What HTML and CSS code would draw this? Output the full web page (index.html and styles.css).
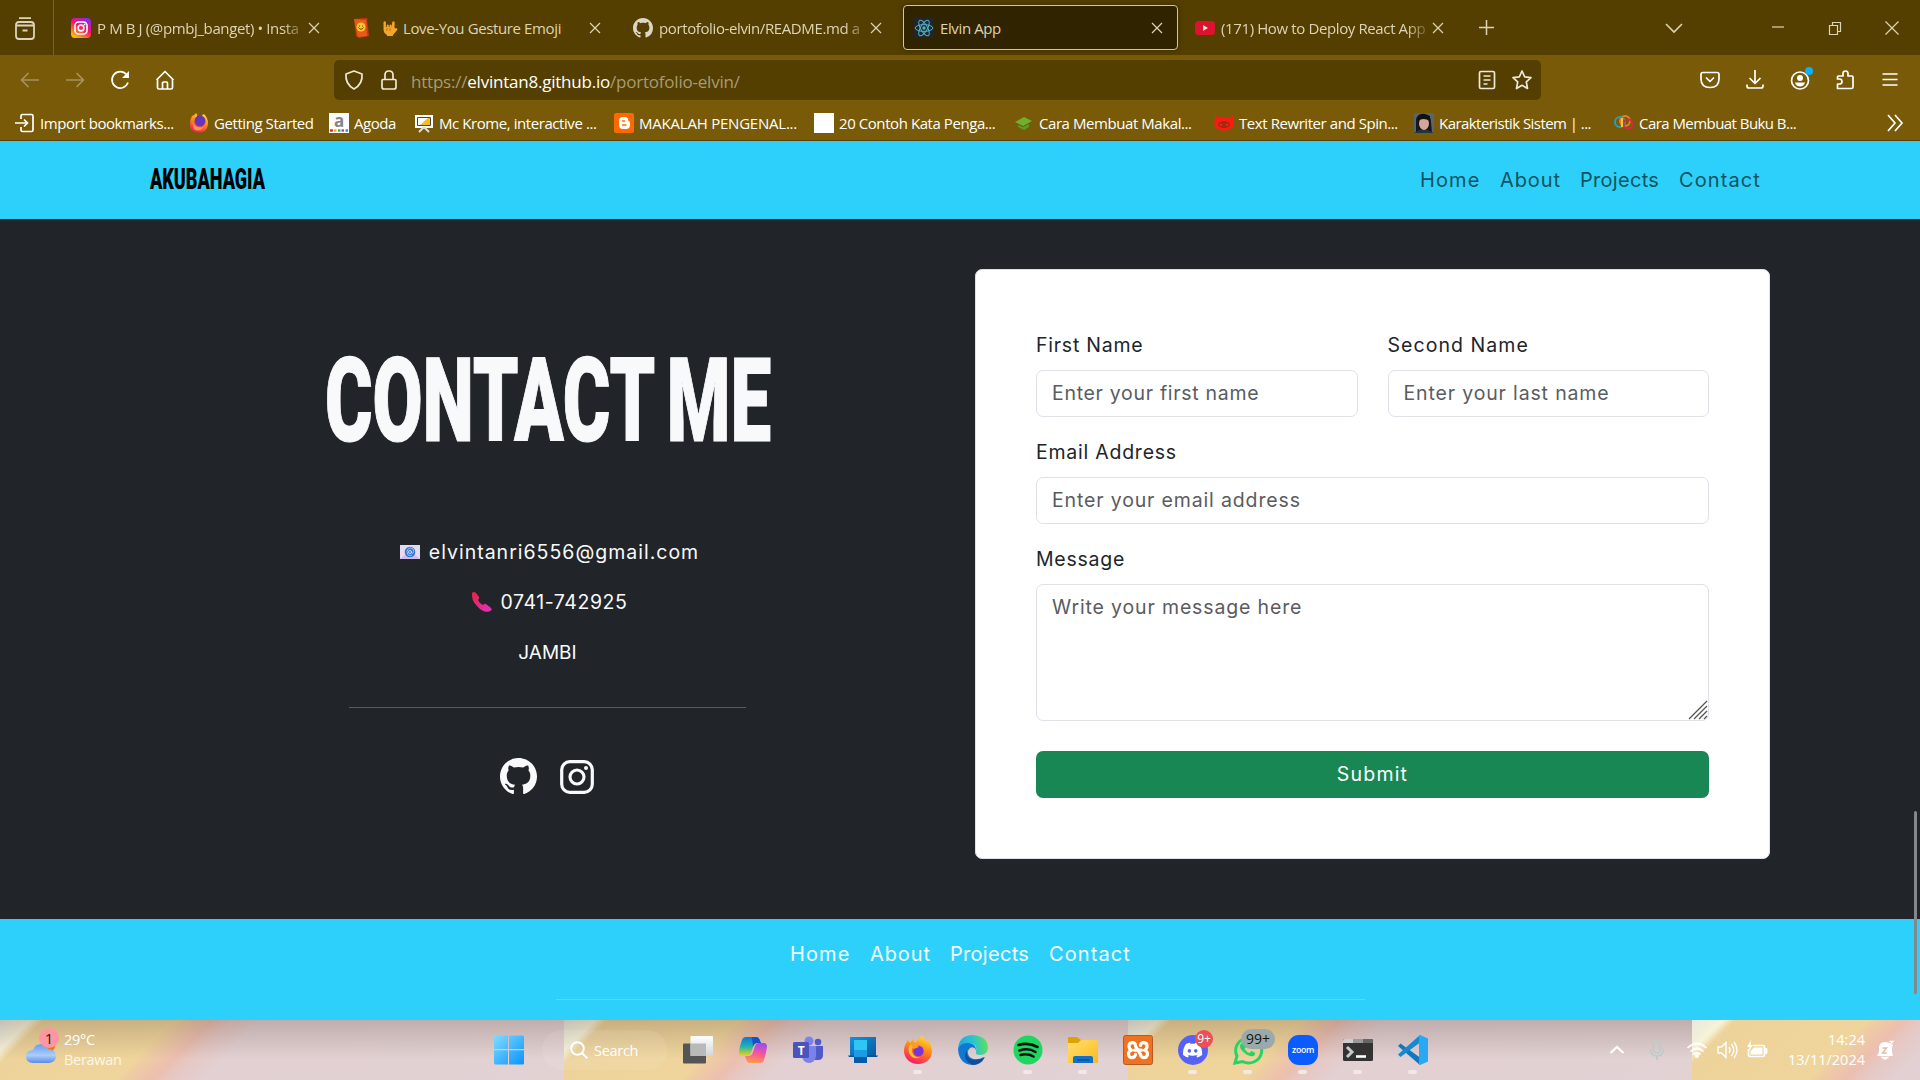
FILE: index.html
```html
<!DOCTYPE html>
<html lang="en">
<head>
<meta charset="utf-8">
<title>Elvin App</title>
<link rel="stylesheet" href="styles.css">
</head>
<body>
<svg class="defs" width="0" height="0" aria-hidden="true">
  <defs>
    <symbol id="close" viewBox="0 0 12 12"><path d="M1 1l10 10M11 1L1 11" fill="none" stroke="currentColor" stroke-width="1.2"/></symbol>
    <symbol id="github" viewBox="0 0 16 16"><path fill="currentColor" d="M8 0C3.58 0 0 3.58 0 8c0 3.54 2.29 6.53 5.47 7.59.4.07.55-.17.55-.38 0-.19-.01-.82-.01-1.49-2.01.37-2.53-.49-2.69-.94-.09-.23-.48-.94-.82-1.13-.28-.15-.68-.52-.01-.53.63-.01 1.08.58 1.23.82.72 1.21 1.87.87 2.33.66.07-.52.28-.87.51-1.07-1.78-.2-3.64-.89-3.64-3.95 0-.87.31-1.59.82-2.15-.08-.2-.36-1.02.08-2.12 0 0 .67-.21 2.2.82.64-.18 1.32-.27 2-.27s1.36.09 2 .27c1.53-1.04 2.2-.82 2.2-.82.44 1.1.16 1.92.08 2.12.51.56.82 1.27.82 2.15 0 3.07-1.87 3.75-3.65 3.95.29.25.54.73.54 1.48 0 1.07-.01 1.93-.01 2.2 0 .21.15.46.55.38A8.01 8.01 0 0 0 16 8c0-4.42-3.58-8-8-8"/></symbol>
    <symbol id="firefox" viewBox="0 0 30 30">
      <path d="M15 4c2-1 3-2 4-4 1 3 3 4 5 7 1-1 1-2 1-2 3 4 4 8 4 11 0 8-6 13-14 13S1 23 1 16c0-5 2-8 4-11l2 3 3-4 2 4z" fill="url(#gFox)"/>
      <path d="M6 11c2-3 6-2 9 0l-6 2c-1 6 3 10 8 9-7 4-13-3-11-11z" fill="#ffc02e"/>
      <circle cx="15.500" cy="16" r="5.200" fill="#7a35d8"/>
      <path d="M7 9c3-1 6 0 9 3l-5 2z" fill="#ff9a24"/>
    </symbol>
    <linearGradient id="gFox" x1=".7" y1="0" x2=".3" y2="1"><stop offset="0" stop-color="#ffe033"/><stop offset=".45" stop-color="#ff8a16"/><stop offset="1" stop-color="#f5156c"/></linearGradient>
    <linearGradient id="gInsta" x1=".8" y1="0" x2=".2" y2="1"><stop offset="0" stop-color="#7b2ff0"/><stop offset=".45" stop-color="#ff0f6c"/><stop offset="1" stop-color="#ffc400"/></linearGradient>
    <linearGradient id="gWin" x1="0" y1="0" x2="1" y2="1"><stop offset="0" stop-color="#7fdcff"/><stop offset="1" stop-color="#0a93fb"/></linearGradient>
    <linearGradient id="gCop1" x1="0" y1="0" x2="0" y2="1"><stop offset="0" stop-color="#1272e0"/><stop offset=".5" stop-color="#21b4a8"/><stop offset="1" stop-color="#f5d21a"/></linearGradient>
    <linearGradient id="gCop2" x1=".6" y1="0" x2=".4" y2="1"><stop offset="0" stop-color="#9b4df0"/><stop offset=".5" stop-color="#f4569a"/><stop offset="1" stop-color="#ff9a4a"/></linearGradient>
    <linearGradient id="gPhone" x1="0" y1="0" x2="1" y2="1"><stop offset="0" stop-color="#1592e0"/><stop offset="1" stop-color="#075a9f"/></linearGradient>
    <linearGradient id="gEdge" x1="0" y1=".4" x2="1" y2=".3"><stop offset="0" stop-color="#1aa8e0"/><stop offset=".5" stop-color="#2cc3d0"/><stop offset="1" stop-color="#62e353"/></linearGradient>
    <linearGradient id="gFolder" x1="0" y1="0" x2="1" y2="1"><stop offset="0" stop-color="#ffdf6e"/><stop offset="1" stop-color="#fcba1e"/></linearGradient>
    <linearGradient id="gCloud" x1="0" y1="0" x2="0" y2="1"><stop offset="0" stop-color="#6c9aef"/><stop offset=".6" stop-color="#a9cdfb"/><stop offset="1" stop-color="#5c8be6"/></linearGradient>
    <linearGradient id="gCall" x1="0" y1="0" x2="1" y2="1"><stop offset="0" stop-color="#e8233e"/><stop offset="1" stop-color="#dc35c0"/></linearGradient>
    <linearGradient id="gTv" x1="0" y1="0" x2="0" y2="1"><stop offset="0" stop-color="#fff"/><stop offset="1" stop-color="#d4d4d4"/></linearGradient>
  </defs>
</svg>

<header class="browser">
  <div class="tabstrip">
    <div class="firefox-view"><svg width="20" height="24" viewBox="0 0 20 24" fill="none" stroke="currentColor" stroke-width="1.800"><path d="M4 1.200h12M1 8.500Q1 5 4 5h12q3 0 3 3.500M1 8.500h18V19q0 3-3 3H4q-3 0-3-3zM7.500 13.500h5"/></svg></div>
    <div class="tab">
      <svg class="fav" viewBox="0 0 20 20"><rect width="20" height="20" rx="4" fill="url(#gInsta)"/><rect x="4" y="4" width="12" height="12" rx="3.500" fill="none" stroke="#fff" stroke-width="1.600"/><circle cx="10" cy="10" r="2.900" fill="none" stroke="#fff" stroke-width="1.600"/><circle cx="13.600" cy="6.400" r=".9" fill="#fff"/></svg>
      <span class="tab-title cut">P M B J (@pmbj_banget) • Insta</span><svg class="x"><use href="#close"/></svg>
    </div>
    <div class="tab">
      <svg class="fav" viewBox="0 0 20 20"><path d="M2 1l13-1 2 18-10 2-3-2z" fill="#c93a0e"/><path d="M2 1l12 1 1 16-9 1z" fill="#ea5a17"/><circle cx="9" cy="9" r="4.500" fill="#ffc832"/><path d="M6.500 9.500q2.500 3.500 5 0M7.500 7.500v1M10.500 7.500v1" stroke="#74370a" fill="none"/></svg>
      <span class="tab-title"><svg class="hand" width="17" height="18" viewBox="0 0 17 18"><path d="M2.500 9V3q1.200-1.500 2.400 0v5h.8V6q1-1 2 0v2h.8V6q1-1 2 0v3l.8-6q1.400-1.400 2.400.2L13.500 9l2.500.5q1 .8 0 1.800L12 16v1H6v-1q-4-2-3.500-7z" fill="#f4a62a"/><path d="M6 9v3M9 9v3" stroke="#c97510"/></svg>Love-You Gesture Emoji</span><svg class="x"><use href="#close"/></svg>
    </div>
    <div class="tab">
      <svg class="fav gh"><use href="#github"/></svg>
      <span class="tab-title cut">portofolio-elvin/README.md a</span><svg class="x"><use href="#close"/></svg>
    </div>
    <div class="tab active">
      <svg class="fav" viewBox="0 0 20 20"><rect width="20" height="20" fill="#22262b"/><g fill="none" stroke="#4eb4cb" stroke-width="1"><ellipse cx="10" cy="10" rx="8.800" ry="3.400"/><ellipse cx="10" cy="10" rx="8.800" ry="3.400" transform="rotate(60 10 10)"/><ellipse cx="10" cy="10" rx="8.800" ry="3.400" transform="rotate(120 10 10)"/></g><circle cx="10" cy="10" r="1.700" fill="#4eb4cb"/></svg>
      <span class="tab-title">Elvin App</span><svg class="x"><use href="#close"/></svg>
    </div>
    <div class="tab">
      <svg class="fav" viewBox="0 0 20 20"><rect y="3" width="20" height="14" rx="3.500" fill="#dc1230"/><path d="M8 7v6l5-3z" fill="#e8dfc8"/></svg>
      <span class="tab-title cut">(171) How to Deploy React App</span><svg class="x"><use href="#close"/></svg>
    </div>
    <svg class="plus" viewBox="0 0 16 16"><path d="M8 0v16M0 8h16" stroke="currentColor" stroke-width="1.600"/></svg>
    <div class="window-controls">
      <svg viewBox="0 0 16 16"><path d="M0 4l8 8 8-8" fill="none" stroke="currentColor" stroke-width="1.600"/></svg>
      <svg viewBox="0 0 16 16"><path d="M2 7h12" stroke="currentColor" stroke-width="1.200"/></svg>
      <svg viewBox="0 0 16 16"><path d="M2.500 5.500h8v9h-8zM5.500 5V2.500h8v9H11" fill="none" stroke="currentColor" stroke-width="1.200"/></svg>
      <svg viewBox="0 0 16 16"><path d="M1.500 1.500l13 13M14.500 1.500l-13 13" stroke="currentColor" stroke-width="1.200"/></svg>
    </div>
  </div>

  <div class="toolbar">
    <div class="nav-buttons">
      <svg class="dim" viewBox="0 0 20 20"><path d="M19 10H1.500M8.500 3l-7 7 7 7"/></svg>
      <svg class="dim" viewBox="0 0 20 20"><path d="M1 10h17.500M11.500 3l7 7-7 7"/></svg>
      <svg viewBox="0 0 20 20"><path d="M18 12.500A8.200 8.200 0 1 1 16.500 4.500" /><path d="M19 1v7h-7z" fill="currentColor" stroke="none"/></svg>
      <svg viewBox="0 0 20 20"><path d="M1.500 10L10 1.500l8.500 8.500M2.500 9v8.500q0 1.500 1.500 1.500h12q1.500 0 1.500-1.500V9M7.500 19v-6q0-1 1-1h3q1 0 1 1v6"/></svg>
    </div>
    <div class="urlbar">
      <svg viewBox="0 0 20 20"><path d="M10 1l8 3q1 10-8 15Q1 14 2 4z"/></svg>
      <svg viewBox="0 0 20 20"><path d="M4 9.500h12q1 0 1 1V17q0 2-2 2H5q-2 0-2-2v-6.500q0-1 1-1zM6 9V5q0-4 4-4t4 4v4"/></svg>
      <span class="url">https://<b>elvintan8.github.io</b>/portofolio-elvin/</span>
      <svg viewBox="0 0 20 20"><path d="M4 1.500h12q1.500 0 1.500 1.500v14q0 1.500-1.500 1.500H4Q2.500 18.500 2.500 17V3Q2.500 1.500 4 1.500zM6.500 6h7M6.500 10h7M6.500 14h4"/></svg>
      <svg viewBox="0 0 20 20"><path d="M10 1l2.700 5.800 6.300.8-4.700 4.300 1.200 6.600L10 15.300l-5.500 3.200 1.200-6.600L1 7.600l6.300-.8z"/></svg>
    </div>
    <div class="tools">
      <svg viewBox="0 0 20 20"><path d="M3 2.500h14q2 0 2 2V9q0 8.500-9 8.500T1 9V4.500q0-2 2-2zM6 7.500l4 4 4-4"/></svg>
      <svg viewBox="0 0 20 20"><path d="M10 0v13M4.500 8l5.500 5.500L15.500 8M2 14.500V16q0 2 2 2h12q2 0 2-2v-1.500"/></svg>
      <svg viewBox="0 0 20 20"><circle cx="10" cy="10.500" r="8.500"/><circle cx="10" cy="8" r="3" fill="currentColor" stroke="none"/><path d="M5 12.500h10q-1 4-5 4t-5-4z" fill="currentColor" stroke="none"/><circle cx="19" cy="1" r="4" fill="#0cb0f8" stroke="none"/></svg>
      <svg viewBox="0 0 20 20"><path d="M2.500 18.500v-4.500h2q2.500 0 2.500-2.500T4.500 9h-2V7q0-1 1-1H8V3.500Q8 1 10.500 1T13 3.500V6h4q1 0 1 1v10q0 1.500-1.500 1.500z"/></svg>
      <svg viewBox="0 0 20 20"><path d="M2.500 4h15M2.500 9.500h15M2.500 15h15"/></svg>
    </div>
  </div>

  <div class="bookmarks">
    <a class="bm first"><svg viewBox="0 0 20 20" fill="none" stroke="#fff" stroke-width="1.700"><path d="M6 6V3q0-1.500 1.500-1.500h9Q18 1.500 18 3v14q0 1.500-1.500 1.500h-9Q6 18.500 6 17v-3M0 10h12M9 6.500l3.500 3.500L9 13.500"/></svg>Import bookmarks...</a>
    <a class="bm second"><svg viewBox="0 0 20 20"><path d="M3 3q3-1 4-3 2 2 1 4h4q2-3 3-3 4 4 4 9 0 9-9 9.500T1 11q0-5 2-8z" fill="url(#gFox)"/><circle cx="11" cy="8" r="5.500" fill="#6735b8"/><path d="M3 8q3 8 12 6-5 6-10 2z" fill="#ff9340"/></svg>Getting Started</a>
    <a class="bm third"><svg viewBox="0 0 20 20"><rect width="20" height="20" fill="#fff"/><text x="10" y="14" text-anchor="middle" font-size="17" font-weight="700" fill="#858585">a</text><path d="M1 17.500h3" stroke="#e12d2d" stroke-width="2.500"/><path d="M5 17.500h2.500" stroke="#f5ad14" stroke-width="2.500"/><path d="M9 17.500h2.500" stroke="#42ac49" stroke-width="2.500"/><path d="M12.500 17.500H15" stroke="#a646bd" stroke-width="2.500"/><path d="M16.500 17.500H19" stroke="#3b83dd" stroke-width="2.500"/></svg>Agoda</a>
    <a class="bm"><svg viewBox="0 0 20 20"><path d="M1 2h18v13H1z" fill="#fff"/><path d="M3.500 4.500h13v8h-13z" fill="#fff" stroke="#444"/><path d="M6 12l8-7h2v7z" fill="#f5bd22"/><path d="M5 19l4-4h2l4 4" stroke="#ddd" stroke-width="2" fill="none"/></svg>Mc Krome, interactive ...</a>
    <a class="bm caps"><svg viewBox="0 0 20 20"><rect width="20" height="20" rx="2" fill="#ff6a00"/><path d="M5 8q0-4 4-4h2q3 0 3.500 4 1.500 0 1.500 2v2q0 4-4 4H9q-4 0-4-4z" fill="#fff"/><path d="M8 8h3M8 12h4.500" stroke="#ff6a00" stroke-width="1.700"/></svg>MAKALAH PENGENAL...</a>
    <a class="bm"><svg viewBox="0 0 20 20"><path d="M0 0h20v20H0z" fill="#fff"/></svg>20 Contoh Kata Penga...</a>
    <a class="bm"><svg viewBox="0 0 20 20"><path d="M1 9l9-5 8 4-9 5z" fill="#6fb12f"/><path d="M4 12l5 2 6-3v3l-5 3-6-3z" fill="#5b9b2c"/></svg>Cara Membuat Makal...</a>
    <a class="bm"><svg viewBox="0 0 20 20"><path d="M1 2l4 3q5-2 10 0l4-3v5q2 5-1 8-8 6-16 0-3-3-1-8z" fill="#fb1b12"/><path d="M4 10q6-4 12 0v2.500q-6 5-12 0z" fill="#a32a0a"/><path d="M5 10l4 2-2 1zM15 10l-4 2 2 1z" fill="#ff2b1a"/></svg>Text Rewriter and Spin...</a>
    <a class="bm tight"><svg viewBox="0 0 20 20"><path d="M0 0h20v20H0z" fill="#59656f"/><path d="M2 20V6q2-6 9-5 6 1 6 8l1 11z" fill="#17181b"/><ellipse cx="10" cy="10.500" rx="5" ry="6.500" fill="#d5a79a"/><path d="M4 8q5-4 12 0V3L9 1 4 4z" fill="#111"/><path d="M0 20l5-3h9l6 3z" fill="#23333f"/></svg>Karakteristik Sistem | ...</a>
    <a class="bm tight"><svg viewBox="0 0 20 20" fill="none" stroke-width="2"><circle cx="11" cy="8" r="5" stroke="#ef7e20"/><circle cx="6" cy="9" r="5" stroke="#24a1b8"/><circle cx="14" cy="11" r="4.500" stroke="#d5264b"/><path d="M8 5v9" stroke="#f4cb1b"/></svg>Cara Membuat Buku B...</a>
    <svg class="more" viewBox="0 0 18 18" fill="none" stroke="#fff" stroke-width="1.700"><path d="M2 1l7 8-7 8M9 1l7 8-7 8"/></svg>
  </div>
</header>

<nav class="site-nav">
  <svg class="brand" width="120" height="30"><text x="0" y="24" textLength="115" lengthAdjust="spacingAndGlyphs">AKUBAHAGIA</text></svg>
  <div class="links"><a>Home</a><a>About</a><a>Projects</a><a>Contact</a></div>
</nav>

<main class="contact">
  <section class="info">
    <svg class="title" width="450" height="100"><text x="2" y="90.500" textLength="446" lengthAdjust="spacingAndGlyphs">CONTACT ME</text></svg>
    <p class="mail"><svg width="20" height="14" viewBox="0 0 20 14"><path d="M0 0h20v14H0z" fill="#e6d9f3"/><path d="M0 14l7-6h6l7 6z" fill="#d3bce8"/><circle cx="10" cy="7" r="5.300" fill="#2f78d4"/><circle cx="10" cy="7" r="1.500" fill="none" stroke="#dcd6f4"/><path d="M11.500 7q0 2 1.500 1t0-4q-3-2-5 0t0 6q2 1 4 0" fill="none" stroke="#c8ccf0" stroke-width=".8"/></svg><span>elvintanri6556@gmail.com</span></p>
    <p class="phone"><svg width="21" height="20" viewBox="0 0 21 20"><path d="M1 1q2-2 4 0l3 4q1 1-1 3 1 3 5 5 2-2 3-1l5 4q2 2-2 3.500Q12 21 6 14 0 8 1 1z" fill="url(#gCall)"/></svg><span>0741-742925</span></p>
    <p class="city"><span>JAMBI</span></p>
    <hr>
    <div class="social">
      <svg width="37" height="37"><use href="#github"/></svg>
      <svg width="34" height="34" viewBox="0 0 34 34"><rect x="1.700" y="1.700" width="30.600" height="30.600" rx="8" fill="none" stroke="#f8f9fa" stroke-width="3.200"/><circle cx="17" cy="17" r="7" fill="none" stroke="#f8f9fa" stroke-width="3.100"/><circle cx="26" cy="8" r="2" fill="#f8f9fa"/></svg>
    </div>
  </section>
  <form class="card">
    <div class="row">
      <div class="field"><label for="first">First Name</label><input id="first" placeholder="Enter your first name"></div>
      <div class="field"><label class="wide" for="last">Second Name</label><input id="last" placeholder="Enter your last name"></div>
    </div>
    <div class="field"><label for="email">Email Address</label><input id="email" placeholder="Enter your email address"></div>
    <div class="field msg"><label for="message">Message</label><textarea id="message" placeholder="Write your message here"></textarea><svg class="grip" width="18" height="18" viewBox="0 0 18 18"><path d="M0 18L18 0M5 18L18 5M10 18l8-8M15 18l3-3" stroke="#555" stroke-width="1.300"/></svg></div>
    <button type="button">Submit</button>
  </form>
</main>

<footer class="site-footer">
  <div class="links"><a>Home</a><a>About</a><a>Projects</a><a>Contact</a></div>
  <hr>
</footer>
<div class="scroll-thumb"></div>

<div class="taskbar">
  <div class="weather">
    <svg width="34" height="38" viewBox="0 0 34 38"><circle cx="24" cy="18" r="6" fill="#f0751a"/><path d="M8 35q-7 0-7-6.500T8 22q2-6 8-6 5 0 7 5 8 1 8 7t-7 7z" fill="url(#gCloud)"/><circle cx="24" cy="10" r="10" fill="#fd96a2"/><text x="24" y="15.500" text-anchor="middle" font-size="15" fill="#222">1</text></svg>
    <div><span>29°C</span><span class="faint">Berawan</span></div>
  </div>
  <div class="apps">
    <div class="app start"><svg viewBox="0 0 30 30" fill="url(#gWin)"><path d="M0 2q0-1.500 1.500-1.500H14V14H0zM15 .5h13.500Q30 .5 30 2v12H15zM0 15.200h14v14.300H1.500Q0 29.500 0 28zM15 15.200h15V28q0 1.500-1.500 1.500H15z"/></svg></div>
    <div class="search"><svg width="18" height="18" viewBox="0 0 18 18" fill="none" stroke="#fff" stroke-width="2"><circle cx="7.500" cy="7.500" r="6.300"/><path d="M12 12l5.300 5.300"/></svg>Search</div>
    <div class="app"><svg viewBox="0 0 30 30"><rect y="8.500" width="23" height="20" rx="1" fill="#555"/><rect x="7.500" y="1" width="22.500" height="20" rx="1" fill="url(#gTv)"/><path d="M7.500 8.500H23V21H7.500z" fill="#b9b9b9"/></svg></div>
    <div class="app"><svg viewBox="0 0 30 30"><path d="M8 2h10q3 0 4 4l1 2h-3q-4 0-5 4l-2 6q-1 3-4 3H4q-3 0-3-4Q2 10 4 5q1-3 4-3z" fill="url(#gCop1)"/><path d="M14 2h4q3 0 4 4l1 2h-4q-3 0-4 4z" fill="#1a4fc8"/><path d="M22 28H12q-3 0-4-4l-1-3h3q4 0 5-4l2-6q1-3 4-3h5q3 0 3 4-1 7-3 13-1 3-4 3z" fill="url(#gCop2)"/></svg></div>
    <div class="app"><svg viewBox="0 0 30 30"><circle cx="16" cy="6" r="4.500" fill="#7b83eb"/><circle cx="25" cy="7" r="3.300" fill="#5059c9"/><path d="M21 11h9v9q0 5-5 5h-4z" fill="#5059c9"/><path d="M10 11h13v10q-1 7-7 7t-7-7z" fill="#7b83eb"/><rect y="7" width="16" height="16" rx="1.500" fill="#4b53bc"/><text x="8" y="19.500" text-anchor="middle" font-size="12" font-weight="700" fill="#fff">T</text></svg></div>
    <div class="app"><svg viewBox="0 0 30 30"><path d="M2 2h26v19H2z" fill="url(#gPhone)"/><path d="M0 20.500h30l-1 1.500H1z" fill="#0c4f8e"/><path d="M6 5h13v22H6z" fill="#1c9ce4"/><path d="M6 5h13v10H6z" fill="#30c6f2"/><path d="M6 22h13v6H6z" fill="#085aa8"/></svg></div>
    <div class="app run"><svg><use href="#firefox"/></svg></div>
    <div class="app"><svg viewBox="0 0 30 30"><path d="M0 14Q1 0 15 0q14 1 15 12 0 8-8 8-5 0-4-3 2-8-6-9Q4 8 0 14z" fill="url(#gEdge)"/><path d="M0 14q3-7 11-6 7 1 7 7-2-4-6-2-5 5 1 10 6 3 13-1-4 8-12 8Q1 29 0 14z" fill="#0f79d2"/><path d="M9 16q-1 8 7 9 6 0 11-3-4 8-12 8-8-3-8-9 0-3 2-5z" fill="#104f9e"/></svg></div>
    <div class="app run"><svg viewBox="0 0 30 30"><circle cx="15" cy="15" r="14.500" fill="#1ed760"/><path d="M5.500 10q10-3 19 2M6.500 15.500q9-3 16 1.500M7.500 20q7-2 13 1.500" fill="none" stroke="#101010" stroke-width="2.600" stroke-linecap="round"/></svg></div>
    <div class="app run"><svg viewBox="0 0 30 30"><path d="M0 3q0-1 1-1h8l4 3h14v5H0z" fill="#e0a006"/><path d="M0 8h10l3-3h16q1 0 1 1v21q0 1-1 1H0z" fill="url(#gFolder)"/><path d="M5 28v-5q0-2 2-2h16q2 0 2 2v5z" fill="#0f72c8"/><path d="M9 25h12" stroke="#0a4a92" stroke-width="1.300"/></svg></div>
    <div class="app"><svg viewBox="0 0 30 30"><rect x=".5" y=".5" width="29" height="29" rx="2" fill="#f0721f" stroke="#b75a26"/><g fill="none" stroke="#fff" stroke-width="3.200" stroke-linecap="round" stroke-linejoin="round"><path d="M11.500 15.200h7"/><path d="M17.500 10.500C17.500 6.500 24 6.500 24 11c0 2-1 3.500-2.500 4.200 2 .6 3 2 3 3.800 0 4.800-7 4.800-7 .3"/><path d="M12.500 19.300c0 4.500-7 4.500-7-.3 0-1.800 1-3.200 3-3.800C7 14.500 6 13 6 11c0-4.500 6.500-4.500 6.500-.5"/><path d="M12.500 11l5 8.500"/></g></svg></div>
    <div class="app run"><svg viewBox="0 0 30 30"><circle cx="15" cy="15" r="15" fill="#5662f5"/><g transform="translate(5 5.500) scale(.8)"><path fill="#fff" d="M20.317 4.370a19.800 19.800 0 0 0-4.885-1.515l-.687 1.287a18 18 0 0 0-5.487 0l-.696-1.287a19.700 19.700 0 0 0-4.885 1.515C.533 9.046-.319 13.580.099 18.058q3 2.300 6.024 3.085l1.310-2.050-1.914-.998.364-.419q6.100 2.800 12.139 0l.45.425-1.920.997 1.309 2.050q3-.8 6.033-3.085c.5-5.177-.838-9.674-3.577-13.693zM8.020 15.330c-1.183 0-2.157-1.085-2.157-2.419s.956-2.419 2.157-2.419 2.176 1.095 2.157 2.419c0 1.333-.956 2.419-2.157 2.419zm7.975 0c-1.183 0-2.157-1.085-2.157-2.419s.955-2.419 2.157-2.419 2.176 1.095 2.157 2.419c0 1.333-.946 2.419-2.157 2.419z"/></g></svg><span class="badge red">9+</span></div>
    <div class="app run"><svg viewBox="0 0 30 30"><path d="M2 28l2-7A13 12.500 0 1 1 9.500 26.500z" fill="none" stroke="#25d366" stroke-width="3"/><path d="M9 8q2-1 3 1l1 3-1.500 2q2 3 5 4l2-2 3 1.500q1.500 1 0 3-3 2-8-1-7-5-6.500-9 0-1 2-2.500z" fill="#25d366"/></svg><span class="badge grey">99+</span></div>
    <div class="app run"><svg viewBox="0 0 30 30"><rect width="30" height="30" rx="11" fill="#0b5cff"/><text x="15" y="18" text-anchor="middle" font-size="8.500" font-weight="600" fill="#fff" textLength="22" lengthAdjust="spacingAndGlyphs">zoom</text></svg></div>
    <div class="app run"><svg viewBox="0 0 30 30"><rect y="4" width="30" height="22" rx="1.500" fill="#333"/><path d="M0 8V5.500Q0 4 1.500 4H10v4z" fill="#cfcfcf"/><path d="M10 4h10v4H10z" fill="#999"/><path d="M20 4h8.500Q30 4 30 5.500V8H20z" fill="#666"/><path d="M4 12l5 5-5 5" fill="none" stroke="#c9c9c9" stroke-width="3"/><path d="M13 21.500h10" stroke="#fff" stroke-width="2.600"/></svg></div>
    <div class="app run"><svg viewBox="0 0 30 30"><path d="M0 11l2.500-2.500L24 24l-2 6z" fill="#0f78c0"/><path d="M0 19.500L2.500 22 24 6l-2-6z" fill="#1689d1"/><path d="M22 0l8 3.500v23L22 30l-1-1V1z" fill="#29a8f4"/></svg></div>
  </div>
  <div class="tray">
    <svg viewBox="0 0 20 20"><path d="M3.500 13L10 7l6.500 6" stroke-width="2.200"/></svg>
    <svg class="mic" viewBox="0 0 20 20"><rect x="6.500" y="0" width="7" height="13" rx="3.500"/><path d="M3.500 9q0 7 6.500 7t6.500-7M10 16v4"/></svg>
    <svg viewBox="0 0 20 20"><path d="M.5 8q9.500-9 19 0M3.500 11.500q6.500-6 13 0M6.500 14.500q3.500-3 7 0"/><circle cx="10" cy="16" r="2" fill="#fff" stroke="none"/></svg>
    <svg viewBox="0 0 20 20"><path d="M1 7h3.500L9 2.500v15L4.500 13H1zM12 7q2 3 0 6M14.500 4q4.500 6 0 12M17 2q6 8 0 16" stroke-width="1.400"/></svg>
    <svg viewBox="0 0 20 20"><path d="M6 5.500h10q1.500 0 1.500 1.500v8q0 1.500-1.500 1.500H3Q1.500 16.500 1.500 15V9M18 9h1.500v4H18"/><path d="M7 7.500h8.500v7H3.500V11z" fill="#fff" stroke="none"/><path d="M4 0L0 7h2.500L2 11l4-6H3.500z" fill="#fff" stroke="none"/></svg>
    <div class="clock"><span>14:24</span><span>13/11/2024</span></div>
    <svg viewBox="0 0 20 20"><path d="M2 16l2-4V8q0-6 6-6 7 0 7 6v4l1 4z" fill="#fff" stroke="none"/><path d="M7.500 17.500q2.500 3 5 0z" fill="#fff"/><path d="M7.500 8h4l-4 5h4" stroke="#e3b9a4" stroke-width="1.300"/><path d="M14.500 1.500H18l-3.500 4H18" stroke="#fff" stroke-width="1.300"/></svg>
  </div>
</div>
</body>
</html>
```
FILE: styles.css
```css
* { box-sizing: border-box; }
body {
  margin: 0; width: 1920px; height: 1080px; overflow: hidden;
  display: flex; flex-direction: column;
  background: #212529; font-family: Inter, sans-serif; font-size: 19.5px;
}
.defs { position: absolute; }
svg { display: block; flex: none; overflow: visible; }
hr { margin: 0; border: 0; height: 1px; }

/* browser window */
.browser { height: 141px; flex: none; background: #785a08; border-bottom: 1px solid #5a4300; font-family: "Open Sans", "Noto Sans", sans-serif; font-size: 15px; color: #fff; }
.tabstrip { height: 55px; background: #543f00; display: flex; align-items: center; color: #ddd3b8; }
.firefox-view { width: 54px; height: 55px; padding: 3px 0 0 15px; border-right: 1px solid #76632f; display: flex; align-items: center; }
.tab { width: 275px; height: 45px; margin-left: 6px; padding: 1px 14px 0 10px; border: 1px solid transparent; border-radius: 4px; display: flex; align-items: center; flex: none; }
.tab.active { background: #302400; border-color: #d8c88c; box-shadow: 0 0 5px #3a2b00; }
.fav { width: 20px; height: 20px; margin-right: 6px; }
.gh { color: #dcd6c7; }
.tab-title { width: 211px; height: 26px; line-height: 26px; white-space: nowrap; display: flex; align-items: center; letter-spacing: -.38px; }
.cut { mask-image: linear-gradient(to right, #000 186px, transparent 211px); display: block; }
.hand { margin: 0 5px 0 3px; }
.x { width: 12px; height: 12px; margin-bottom: 1px; }
.plus { width: 15px; height: 15px; margin-left: 20px; }
.window-controls { margin-left: auto; display: flex; gap: 41px; padding-right: 20px; }
.window-controls svg { width: 16px; height: 16px; }
.window-controls svg:first-child { margin-right: 47px; }
.toolbar { height: 50px; display: flex; align-items: center; }
.toolbar svg { width: 20px; height: 20px; fill: none; stroke: currentColor; stroke-width: 1.7; stroke-linejoin: round; }
.toolbar .dim { stroke: #a7935f; }
.nav-buttons { width: 334px; display: flex; gap: 25px; padding-left: 20px; }
.urlbar { width: 1207px; height: 40px; background: #543f00; border-radius: 5px; padding: 0 9px 0 10px; display: flex; align-items: center; gap: 15px; color: #eee8da; }
.url { flex: 1; margin-left: -3px; padding-top: 2px; font-size: 17px; color: #a89b75; letter-spacing: -.22px; }
.url b { font-weight: 400; color: #fff; }
.tools { display: flex; gap: 25px; margin-left: 159px; }
.bookmarks { height: 35px; display: flex; align-items: center; padding: 0 16px 0 15px; }
.bm { width: 200px; display: flex; align-items: center; gap: 5px; letter-spacing: -.43px; white-space: nowrap; }
.bm svg { width: 20px; height: 20px; }
.bm.first { width: 174px; }
.bm.second { width: 140px; }
.bm.third { width: 85px; }
.bm.caps { letter-spacing: -.22px; }
.bm.tight { letter-spacing: -.55px; }
.more { width: 18px; height: 18px; margin-left: auto; }

/* site */
.site-nav { height: 78px; flex: none; background: #2dd0fa; display: flex; align-items: center; justify-content: space-between; padding: 0 150px; }
.brand { font: 900 29.500px Roboto, sans-serif; }
.links { display: flex; font-size: 20px; }
.links a { height: 30px; padding: 0 0 0 10px; line-height: 30px; letter-spacing: .9px; }
.links a:nth-child(1), .links a:nth-child(2) { width: 80px; }
.links a:nth-child(1) { letter-spacing: 1.1px; }
.links a:nth-child(3) { width: 99px; letter-spacing: .3px; }
.links a:nth-child(4) { width: 101px; letter-spacing: 1.1px; }
.site-nav .links { color: #11535f; }
.contact { height: 700px; flex: none; display: flex; gap: 30px; padding: 50px 150px 0; }
.info { width: 795px; display: flex; flex-direction: column; align-items: center; color: #f8f9fa; }
.title { margin-top: 81px; font: 900 116px Roboto, sans-serif; fill: #f8f9fa; stroke: #f8f9fa; stroke-width: 1.2px; word-spacing: -7px; }
.info p { margin: 0 0 20px; height: 30px; line-height: 30px; display: flex; align-items: center; gap: 9px; }
.info .mail { margin-top: 87px; padding-left: 4px; letter-spacing: 1px; }
.info .phone { padding-left: 3px; letter-spacing: .55px; }
.info .city { font-size: 19px; padding-top: 1px; }
.info hr { width: 397px; margin-top: 20px; background: #575b5f; }
.social { display: flex; align-items: center; gap: 23px; margin: 50px 2px 0 0; }
.card { width: 795px; height: 590px; background: #fff; border: 1px solid #dee2e6; border-radius: 7px; padding: 60px; color: #212529; letter-spacing: .85px; }
.row { display: flex; gap: 30px; }
.row .field { flex: 1; }
.field { margin-bottom: 20px; position: relative; }
.field label { display: block; height: 30px; line-height: 30px; letter-spacing: .76px; }
.field .wide { letter-spacing: 1.05px; }
.card input, .card textarea { display: block; width: 100%; height: 47px; margin-top: 10px; padding: 6px 15px 8px; border: 1px solid #dee2e6; border-radius: 7px; background: #fff; font: inherit; line-height: 31px; outline: 0; resize: none; letter-spacing: inherit; }
.card textarea { height: 137px; padding-top: 7px; }
.card #first { letter-spacing: .7px; }
.card ::placeholder { color: #595c5f; opacity: 1; }
.card .msg { margin-bottom: 30px; }
.grip { position: absolute; right: 2px; bottom: 2px; }
.card button { display: block; width: 100%; height: 47px; border: 0; border-radius: 7px; background: #198754; color: #fff; font: inherit; padding: 0 0 1px; letter-spacing: 1.2px; }
.site-footer { height: 101px; flex: none; background: #2dd0fa; color: #f3fcff; display: flex; flex-direction: column; align-items: center; padding-top: 20px; }
.site-footer hr { width: 809px; margin-top: 30px; background: #58dafb; }
.scroll-thumb { position: absolute; left: 1914px; top: 811px; width: 3px; height: 183px; border-radius: 2px; background: #84888b; }

/* taskbar */
.taskbar {
  height: 60px; flex: none; display: flex; align-items: center; color: #fff;
  font-family: "Open Sans", "Noto Sans", sans-serif; font-size: 14.500px; letter-spacing: -.3px;
  background:
    linear-gradient(to bottom, rgba(70,50,40,.22), rgba(70,50,40,0) 65%) 0 0 / 1692px 60px no-repeat,
    linear-gradient(135deg, #e6e8e0 0, #f7f3d8 5%, #edd299 7%, #efd59c 28%, #efcba4 30%, #ecbfb0 34%, #e6c8c4 37%, #e2d0d2 42%, #e2d2d2 100%) 0 0 / 564px 60px repeat-x;
}
.weather { width: 481px; padding-left: 25px; display: flex; align-items: center; gap: 5px; }
.weather svg { margin-bottom: 6px; }
.weather div, .clock { display: flex; flex-direction: column; line-height: 20px; }
.faint { color: #fff6e4; }
.apps { display: flex; align-items: center; }
.app { width: 55px; height: 60px; position: relative; display: flex; align-items: center; justify-content: center; }
.app > svg { width: 30px; height: 30px; }
.run::after { content: ""; position: absolute; left: 23px; top: 50px; width: 9px; height: 4px; border-radius: 2px; background: #f1e9e8; }
.search { width: 125px; height: 40px; margin: 0 3px 0 6px; padding-left: 28px; border-radius: 20px; background: rgba(255,255,255,.09); display: flex; align-items: center; gap: 6px; }
.badge { position: absolute; letter-spacing: 0; text-align: center; }
.red { left: 30px; top: 10px; width: 18px; height: 18px; line-height: 17px; border-radius: 9px; background: #ee4f55; font-size: 12px; }
.grey { left: 21px; top: 9px; width: 34px; height: 20px; line-height: 20px; border-radius: 10px; background: #9aa9ab; color: #161616; font-size: 14px; }
.tray { margin-left: auto; padding-right: 25px; display: flex; align-items: center; gap: 10px; }
.tray svg { width: 20px; height: 20px; fill: none; stroke: #fff; stroke-width: 1.7; }
.tray svg:first-child { margin-right: 10px; }
.tray .mic { stroke: #bccbca; margin-right: 10px; }
.clock { width: 88px; text-align: right; letter-spacing: 0; }
```
